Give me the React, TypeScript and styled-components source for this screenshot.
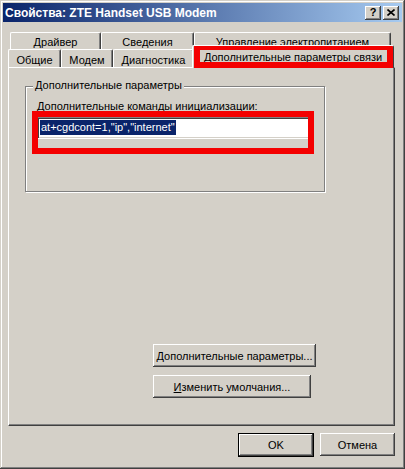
import React from 'react';
import styled, { createGlobalStyle } from 'styled-components';

const GlobalStyle = createGlobalStyle`
  html, body {
    margin: 0;
    padding: 0;
    background: #d4d0c8;
  }
  body {
    font-family: 'Liberation Sans', Arial, sans-serif;
    font-size: 11px;
    color: #000;
  }
`;

const raised = `
  box-shadow: inset -1px -1px #404040, inset 1px 1px #ffffff,
    inset -2px -2px #808080, inset 2px 2px #d4d0c8;
`;

const Window = styled.div`
  box-sizing: border-box;
  width: 405px;
  height: 469px;
  padding: 3px;
  background: #d4d0c8;
  box-shadow: inset -1px -1px #404040, inset 1px 1px #d4d0c8,
    inset -2px -2px #808080, inset 2px 2px #ffffff;
  display: flex;
  flex-direction: column;
`;

const TitleBar = styled.div`
  height: 19px;
  display: flex;
  align-items: center;
  justify-content: space-between;
  padding: 0 3px 0 2px;
  background: linear-gradient(to right, #0a246a, #a6caf0);
`;

const Title = styled.span`
  color: #fff;
  font-weight: bold;
  font-size: 12px;
  white-space: nowrap;
`;

const TitleButtons = styled.div`
  display: flex;
  gap: 2px;
`;

const CaptionButton = styled.div`
  box-sizing: border-box;
  width: 16px;
  height: 14px;
  background: #d4d0c8;
  ${raised}
  display: flex;
  align-items: center;
  justify-content: center;
  font-weight: bold;
  font-size: 11px;
  line-height: 1;
`;

const Body = styled.div`
  flex: 1;
  display: flex;
  flex-direction: column;
  padding: 10px 7px 0 5px;
`;

const TabRow = styled.div<{ $indent: number; $h: number }>`
  display: flex;
  height: ${(p) => p.$h}px;
  padding-left: ${(p) => p.$indent}px;
`;

const Tab = styled.div<{ $w: number; $pt: number }>`
  box-sizing: border-box;
  flex: none;
  width: ${(p) => p.$w}px;
  padding-top: ${(p) => p.$pt}px;
  text-align: center;
  white-space: nowrap;
  overflow: hidden;
  background: #d4d0c8;
  border-top: 1px solid #fff;
  border-left: 1px solid #fff;
  border-right: 1px solid #404040;
  border-radius: 2px 2px 0 0;
  box-shadow: inset -1px 0 #808080;
`;

const ActiveTab = styled(Tab)`
  position: relative;
  z-index: 2;
  height: 23px;
  margin: -4px -2px -1px -2px;
`;

const Highlight = styled.div`
  position: absolute;
  box-sizing: border-box;
  border: 6px solid #f40000;
  pointer-events: none;
`;

const TabMark = styled(Highlight)`
  top: -2px;
  left: 1px;
  right: 0;
  bottom: 0;
`;

const FieldMark = styled(Highlight)`
  top: -6px;
  left: -5px;
  right: -3px;
  bottom: -15px;
`;

const Panel = styled.div`
  box-sizing: border-box;
  height: 359px;
  display: flex;
  flex-direction: column;
  padding: 18px 0 27px 16px;
  border-top: 1px solid #fff;
  border-left: 1px solid #fff;
  border-right: 1px solid #404040;
  border-bottom: 1px solid #404040;
  box-shadow: inset -1px -1px #808080;
`;

const GroupBox = styled.div`
  position: relative;
  box-sizing: border-box;
  width: 300px;
  height: 106px;
  padding: 13px 0 0 11px;
  border: 1px solid #808080;
  box-shadow: inset 1px 1px #fff, 1px 1px #fff;
`;

const GroupCaption = styled.span`
  position: absolute;
  top: -8px;
  left: 7px;
  padding: 0 2px;
  background: #d4d0c8;
  white-space: nowrap;
`;

const FieldLabel = styled.div`
  line-height: 13px;
  margin-bottom: 4px;
  white-space: nowrap;
`;

const InputWrap = styled.div`
  position: relative;
  width: 274px;
`;

const TextInput = styled.div`
  box-sizing: border-box;
  height: 22px;
  padding: 3px 0 0 3px;
  background: #fff;
  box-shadow: inset 1px 1px #808080, inset -1px -1px #fff,
    inset 2px 2px #404040, inset -2px -2px #d4d0c8;
`;

const Selection = styled.span`
  display: inline-block;
  height: 15px;
  line-height: 15px;
  padding: 0 1px;
  background: #0a246a;
  color: #fff;
  white-space: nowrap;
`;

const ButtonStack = styled.div`
  margin-top: auto;
  margin-left: 128px;
  display: flex;
  flex-direction: column;
  gap: 8px;
`;

const Button = styled.div<{ $w: number; $default?: boolean }>`
  box-sizing: border-box;
  width: ${(p) => p.$w}px;
  height: ${(p) => (p.$default ? 24 : 23)}px;
  display: flex;
  align-items: center;
  justify-content: center;
  background: #d4d0c8;
  white-space: nowrap;
  border: ${(p) => (p.$default ? '1px solid #000' : 'none')};
  ${raised}
`;

const Footer = styled.div`
  display: flex;
  justify-content: flex-end;
  gap: 6px;
  padding-top: 7px;
`;

const Key = styled.u`
  text-underline-offset: 1px;
`;

export default function App() {
  return (
    <>
      <GlobalStyle />
      <Window>
        <TitleBar>
          <Title>Свойства: ZTE Handset USB Modem</Title>
          <TitleButtons>
            <CaptionButton>?</CaptionButton>
            <CaptionButton>
              <svg width="8" height="7" viewBox="0 0 8 7">
                <path d="M0.5 0.5 L7.5 6.5 M7.5 0.5 L0.5 6.5" stroke="#000" strokeWidth="1.6" />
              </svg>
            </CaptionButton>
          </TitleButtons>
        </TitleBar>
        <Body>
          <TabRow $indent={2} $h={17}>
            <Tab $w={91} $pt={3}>Драйвер</Tab>
            <Tab $w={93} $pt={3}>Сведения</Tab>
            <Tab $w={197} $pt={3}>Управление электропитанием</Tab>
          </TabRow>
          <TabRow $indent={0} $h={18}>
            <Tab $w={53} $pt={4}>Общие</Tab>
            <Tab $w={52} $pt={4}>Модем</Tab>
            <Tab $w={81} $pt={4}>Диагностика</Tab>
            <ActiveTab $w={202} $pt={5}>
              Дополнительные параметры связи
              <TabMark />
            </ActiveTab>
          </TabRow>
          <Panel>
            <GroupBox>
              <GroupCaption>Дополнительные параметры</GroupCaption>
              <FieldLabel>Дополнительные команды инициализации:</FieldLabel>
              <InputWrap>
                <TextInput>
                  <Selection>at+cgdcont=1,"ip","internet"</Selection>
                </TextInput>
                <FieldMark />
              </InputWrap>
            </GroupBox>
            <ButtonStack>
              <Button $w={163}>
                <span><Key>Д</Key>ополнительные параметры...</span>
              </Button>
              <Button $w={158}>
                <span><Key>И</Key>зменить умолчания...</span>
              </Button>
            </ButtonStack>
          </Panel>
          <Footer>
            <Button $w={76} $default>OK</Button>
            <Button $w={75}>Отмена</Button>
          </Footer>
        </Body>
      </Window>
    </>
  );
}
